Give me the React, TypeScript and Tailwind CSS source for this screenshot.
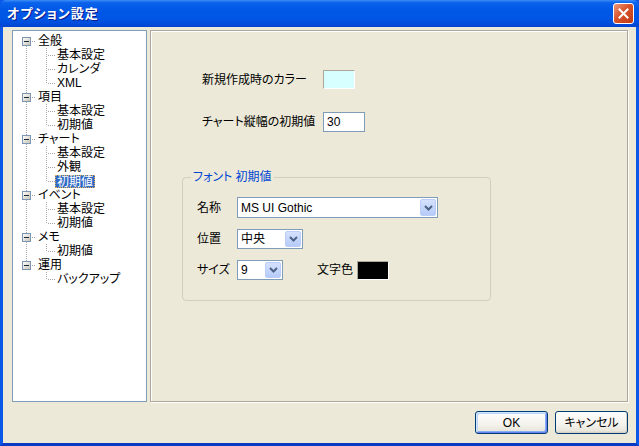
import React from 'react';

type TreeNode = { label: string; children: string[] };

const tree: TreeNode[] = [
  { label: '全般', children: ['基本設定', 'カレンダ', 'XML'] },
  { label: '項目', children: ['基本設定', '初期値'] },
  { label: 'チャート', children: ['基本設定', '外観', '初期値'] },
  { label: 'イベント', children: ['基本設定', '初期値'] },
  { label: 'メモ', children: ['初期値'] },
  { label: '運用', children: ['バックアップ'] },
];

const DOT = '#a5a5a5';

// expand box + connectors for a root row
const RootGutter: React.FC<{ idx: number; first: boolean; last: boolean }> = ({ idx, first, last }) => (
  <svg width={19} height={14} className="shrink-0">
    <defs>
      <linearGradient id={`tb-${idx}`} x1="0" y1="0" x2="1" y2="1">
        <stop offset="0" stopColor="#ffffff" />
        <stop offset="1" stopColor="#c6c3b3" />
      </linearGradient>
    </defs>
    {!first && <line x1={9.5} y1={0} x2={9.5} y2={3} stroke={DOT} strokeDasharray="1 1" />}
    {!last && <line x1={9.5} y1={12} x2={9.5} y2={14} stroke={DOT} strokeDasharray="1 1" />}
    <line x1={15} y1={7.5} x2={19} y2={7.5} stroke={DOT} strokeDasharray="1 1" />
    <rect x={5.5} y={3.5} width={8} height={8} fill={`url(#tb-${idx})`} stroke="#7a96b4" />
    <line x1={7} y1={7.5} x2={12} y2={7.5} stroke="#1b2a3a" />
  </svg>
);

// connectors for a child row
const ChildGutter: React.FC<{ parentLast: boolean; lastChild: boolean }> = ({ parentLast, lastChild }) => (
  <svg width={38} height={14} className="shrink-0">
    {!parentLast && <line x1={9.5} y1={0} x2={9.5} y2={14} stroke={DOT} strokeDasharray="1 1" />}
    <line x1={29.5} y1={0} x2={29.5} y2={lastChild ? 8 : 14} stroke={DOT} strokeDasharray="1 1" />
    <line x1={31} y1={7.5} x2={38} y2={7.5} stroke={DOT} strokeDasharray="1 1" />
  </svg>
);

const Tree: React.FC = () => (
  <div className="w-[135px] h-full bg-white border border-[#7f9db9] pt-[3px] pl-[4px]">
    {tree.map((node, i) => {
      const rootLast = i === tree.length - 1;
      return (
        <div key={node.label}>
          <div className="flex items-center h-[14px]">
            <RootGutter idx={i} first={i === 0} last={rootLast} />
            <span className="pl-[2px] leading-[14px]">{node.label}</span>
          </div>
          {node.children.map((child, j) => {
            const selected = node.label === 'チャート' && child === '初期値';
            return (
              <div key={child + j} className="flex items-center h-[14px]">
                <ChildGutter parentLast={rootLast} lastChild={j === node.children.length - 1} />
                {selected ? (
                  <span className="px-[1px] h-[13px] leading-[13px] bg-[#316ac5] text-white border border-dotted border-[#e0b050]">
                    {child}
                  </span>
                ) : (
                  <span className="px-[2px] leading-[14px]">{child}</span>
                )}
              </div>
            );
          })}
        </div>
      );
    })}
  </div>
);

const Chevron: React.FC = () => (
  <svg width={9} height={6} viewBox="0 0 9 6">
    <path d="M1 1 L4.5 4.5 L8 1" fill="none" stroke="#4d6185" strokeWidth={2} />
  </svg>
);

const Combo: React.FC<{ value: string; width: string; height: string }> = ({ value, width, height }) => (
  <div className={`flex items-stretch bg-white border border-[#7f9db9] ${width} ${height}`}>
    <span className="flex-1 pl-[3px] flex items-center">{value}</span>
    <span className="m-[1px] w-[16px] flex items-center justify-center rounded-[2px] border border-[#bccdf7] bg-[linear-gradient(to_bottom,#d4e1fd,#b6cbf9)]">
      <Chevron />
    </span>
  </div>
);

const SwatchBox: React.FC<{ color: string; cls: string }> = ({ color, cls }) => (
  <div
    className={`${cls} ${color} border-t border-l border-t-[#aca899] border-l-[#aca899] border-b border-r border-b-white border-r-white`}
  />
);

const Panel: React.FC = () => (
  <div className="flex-1 h-full border border-[#aca899] shadow-[inset_1px_1px_0_#ffffff,1px_1px_0_#ffffff] flex flex-col">
    <div className="flex items-center mt-[39px] pl-[51px]">
      <span className="w-[121px]">新規作成時のカラー</span>
      <SwatchBox color="bg-[#d8ffff]" cls="w-[32px] h-[19px]" />
    </div>
    <div className="flex items-center mt-[23px] pl-[51px]">
      <span className="w-[121px]">チャート縦幅の初期値</span>
      <div className="w-[42px] h-[20px] bg-white border border-[#7f9db9] pl-[3px] flex items-center">30</div>
    </div>
    <fieldset className="ml-[31px] mt-[38px] w-[309px] h-[131px] border border-[#d0d0bf] rounded-[4px]">
      <legend className="ml-[8px] px-[2px] leading-[14px] text-[#0046d5]">フォント 初期値</legend>
      <div className="flex items-center mt-[13px] pl-[14px]">
        <span className="w-[40px]">名称</span>
        <Combo value="MS UI Gothic" width="w-[201px]" height="h-[21px]" />
      </div>
      <div className="flex items-center mt-[11px] pl-[14px]">
        <span className="w-[40px]">位置</span>
        <Combo value="中央" width="w-[66px]" height="h-[20px]" />
      </div>
      <div className="flex items-center mt-[11px] pl-[14px]">
        <span className="w-[40px]">サイズ</span>
        <Combo value="9" width="w-[46px]" height="h-[20px]" />
        <span className="ml-[34px] w-[40px]">文字色</span>
        <SwatchBox color="bg-black" cls="w-[32px] h-[19px]" />
      </div>
    </fieldset>
  </div>
);

const XpButton: React.FC<{ label: string; isDefault?: boolean }> = ({ label, isDefault }) => (
  <button
    className={`w-[73px] h-[23px] rounded-[3px] border border-[#003c74] bg-[linear-gradient(to_bottom,#ffffff,#f3f2ec_60%,#e6e3d6)] flex items-center justify-center ${
      isDefault
        ? 'shadow-[inset_1px_1px_0_#cee7ff,inset_-1px_-1px_0_#6982ee,inset_2px_2px_0_#bcd4f6,inset_-2px_-2px_0_#89adf4]'
        : 'shadow-[inset_-1px_-1px_0_#d6d0c5,inset_0_-2px_0_#e2ded6]'
    }`}
  >
    {label}
  </button>
);

const TitleBar: React.FC = () => (
  <div className="h-[27px] shrink-0 flex items-center justify-between pl-[7px] pr-[5px] rounded-t-[6px] bg-[linear-gradient(to_bottom,#3b8df7_0%,#0b62ec_10%,#0058e6_35%,#0055e5_70%,#004ad9_90%,#0043cf_100%)]">
    <span className="text-white font-bold text-[13px] tracking-[1px] [text-shadow:1px_1px_0_#0a1a8a]">
      オプション設定
    </span>
    <div className="w-[21px] h-[21px] rounded-[3px] border border-white bg-[linear-gradient(135deg,#ed9a7c,#d8532a_45%,#c13a12)] flex items-center justify-center">
      <svg width={11} height={11} viewBox="0 0 11 11">
        <path d="M1.5 1.5 L9.5 9.5 M9.5 1.5 L1.5 9.5" stroke="#ffffff" strokeWidth={2} strokeLinecap="square" />
      </svg>
    </div>
  </div>
);

export default function App() {
  return (
    <div className="w-[639px] h-[446px] flex flex-col bg-[#0b57e8] text-[12px] text-black font-['Liberation_Sans','Noto_Sans_CJK_JP',sans-serif] [font-feature-settings:'palt']">
      <TitleBar />
      <div className="flex-1 flex flex-col bg-[#ece9d8] border-x-[3px] border-b-[3px] border-x-[#0b57e8] border-b-[#0a3ac4] pt-[3px] pl-[9px] pr-[8px]">
        <div className="flex gap-[3px] h-[372px]">
          <Tree />
          <Panel />
        </div>
        <div className="flex justify-end gap-[7px] mt-[9px]">
          <XpButton label="OK" isDefault />
          <XpButton label="キャンセル" />
        </div>
      </div>
    </div>
  );
}
